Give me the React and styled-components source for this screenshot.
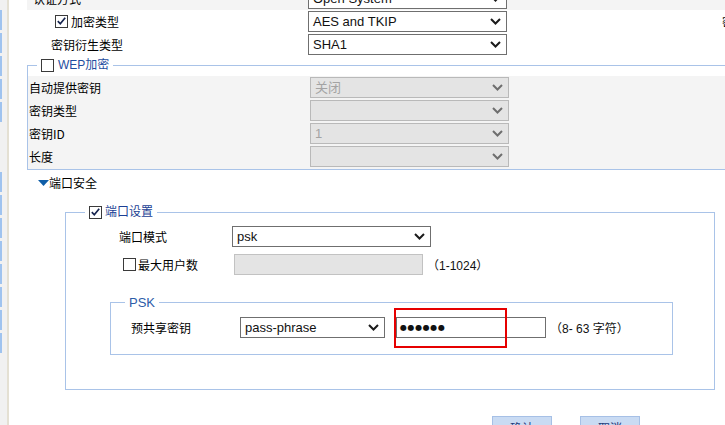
import React from "react";
import styled, { createGlobalStyle } from "styled-components";

const GlobalStyle = createGlobalStyle`
  html, body { margin: 0; padding: 0; background: #fff; }
  body { width: 725px; height: 425px; overflow: hidden; }
`;

const Page = styled.div`
  display: flex;
  width: 725px;
  height: 425px;
  overflow: hidden;
  background: #fff;
`;

const SideNav = styled.div`
  flex: none;
  width: 7px;
  background: #f1f1f1;
  border-right: 2px solid #e4e0d3;
  display: flex;
  flex-direction: column;
  gap: 3px;
  padding-top: 10px;
`;

const NavMark = styled.div`
  width: 2px;
  height: ${(p) => p.$h}px;
  background: ${(p) => (p.$blank ? "transparent" : "#9fc3ef")};
`;

const Main = styled.div`
  flex: 1;
  min-width: 0;
  overflow: hidden;
  padding-left: 18px;
  display: flex;
  flex-direction: column;
  font-family: "Noto Sans CJK SC", "Liberation Sans", sans-serif;
  font-size: 12px;
  color: #000;
`;

const FormRow = styled.div`
  display: grid;
  grid-template-columns: 281px 199px 1fr;
  align-items: center;
  height: 23px;
  flex: none;
  background: ${(p) => (p.$shade ? "#f4f4f4" : "transparent")};
  margin-top: ${(p) => p.$mt || 0}px;
`;

const Label = styled.div`
  display: flex;
  align-items: center;
  gap: ${(p) => p.$gap ?? 3}px;
  padding-left: ${(p) => p.$indent || 0}px;
  white-space: nowrap;
  line-height: 13px;
`;

const EdgeGlyph = styled.div`
  margin-left: 215px;
  white-space: nowrap;
`;

const SelectBox = styled.div`
  position: relative;
  box-sizing: border-box;
  width: ${(p) => p.$w || 199}px;
  height: 21px;
  border: 1px solid ${(p) => (p.$disabled ? "#b9b9b9" : "#6f6f6f")};
  background: ${(p) => (p.$disabled ? "#e4e4e4" : "#fff")};
  color: ${(p) => (p.$disabled ? "#a3a3a3" : "#111")};
  font-family: "Liberation Sans", "Noto Sans CJK SC", Arial, sans-serif;
  font-size: 13px;
  line-height: 19px;
  padding-left: 4px;
  white-space: nowrap;
  overflow: hidden;
`;

const Chevron = styled.svg`
  position: absolute;
  right: 5px;
  top: 6px;
`;

function Select({ value, disabled, w }) {
  return (
    <SelectBox $disabled={disabled} $w={w}>
      {value}
      <Chevron width="11" height="7" viewBox="0 0 11 7">
        <polyline
          points="1,1 5.5,5.5 10,1"
          fill="none"
          stroke={disabled ? "#6e6e6e" : "#1b1b1b"}
          strokeWidth="2"
        />
      </Chevron>
    </SelectBox>
  );
}

const Box = styled.span`
  display: inline-flex;
  flex: none;
  box-sizing: border-box;
  width: 13px;
  height: 13px;
  border: 1px solid #3a3a3a;
  background: #fff;
  margin-left: ${(p) => p.$ml || 0}px;
`;

function Checkbox({ checked, ml }) {
  return (
    <Box $ml={ml}>
      {checked && (
        <svg width="11" height="11" viewBox="0 0 11 11">
          <path d="M1.8 5.2 L4.3 7.8 L9.2 1.8" fill="none" stroke="#16244f" strokeWidth="1.7" />
        </svg>
      )}
    </Box>
  );
}

const Fieldset = styled.fieldset`
  box-sizing: border-box;
  min-width: 0;
  margin: ${(p) => p.$margin};
  padding: 0;
  border: 1px solid #a9c3e8;
  width: ${(p) => p.$w || "auto"};
  flex: none;
`;

const Legend = styled.legend`
  display: flex;
  align-items: center;
  gap: ${(p) => p.$gap ?? 3}px;
  margin-left: ${(p) => p.$ml}px;
  padding: 0 4px;
  height: ${(p) => p.$h || 13}px;
  line-height: ${(p) => p.$h || 13}px;
  color: ${(p) => p.$color};
  font-family: ${(p) => (p.$latin ? '"Liberation Sans", Arial, sans-serif' : '"Liberation Sans", "Noto Sans CJK SC", sans-serif')};
  font-size: ${(p) => p.$fs || 12}px;
  white-space: nowrap;
`;

const WepBody = styled.div`
  margin-top: 4px;
  background: #f4f4f4;
  padding: 0 0 1px 1px;
`;

const SectionHeader = styled.div`
  display: flex;
  align-items: center;
  height: 13px;
  margin-top: 6px;
  padding-left: 11px;
  flex: none;
`;

const PortBody = styled.div`
  padding: 7px 0 34px 44px;
  display: flex;
  flex-direction: column;
`;

const PortRow = styled.div`
  display: grid;
  grid-template-columns: ${(p) => p.$cols};
  align-items: center;
  height: 21px;
  padding-left: ${(p) => p.$pl || 0}px;
  margin-top: ${(p) => p.$mt || 0}px;
`;

const Field = styled.div`
  display: flex;
  align-items: center;
  gap: 4px;
  margin-left: ${(p) => p.$ml || 0}px;
`;

const DisabledInput = styled.div`
  box-sizing: border-box;
  width: 189px;
  height: 21px;
  background: #e4e4e4;
  border: 1px solid #c2c2c2;
`;

const Hint = styled.span`
  font-family: "Liberation Sans", "Noto Sans CJK SC", Arial, sans-serif;
  font-size: 12px;
  white-space: nowrap;
  color: #111;
`;

const PskBody = styled.div`
  padding: 7px 0 16px 20px;
`;

const PasswordWrap = styled.div`
  position: relative;
`;

const PasswordBox = styled.div`
  box-sizing: border-box;
  width: 150px;
  height: 21px;
  border: 1px solid #6f6f6f;
  background: #fff;
  padding-left: 3px;
  font-family: "DejaVu Sans", sans-serif;
  font-size: 8px;
  line-height: 19px;
  letter-spacing: 0.6px;
  color: #111;
`;

const RedMark = styled.div`
  position: absolute;
  left: -2px;
  top: -9px;
  width: 113px;
  height: 40px;
  box-sizing: border-box;
  border: 2px solid #e60000;
  pointer-events: none;
`;

const ButtonBar = styled.div`
  display: flex;
  gap: 28px;
  margin-top: 26px;
  padding-left: 465px;
  flex: none;
`;

const Button = styled.button`
  width: 60px;
  height: 22px;
  flex: none;
  background: #c9dbf3;
  border: 1px solid #a6c0e6;
  color: #1d3a7a;
  font-family: "Noto Sans CJK SC", sans-serif;
  font-size: 12px;
  padding: 0;
`;

const navMarks = [
  20, 20, 20, 20, 20, "blank", 20, 20, 20, 20, 20, 20, 20, 20,
];

export default function App() {
  return (
    <>
      <GlobalStyle />
      <Page>
        <SideNav>
          {navMarks.map((m, i) =>
            m === "blank" ? <NavMark key={i} $h={44} $blank /> : <NavMark key={i} $h={m} />
          )}
        </SideNav>
        <Main>
          <FormRow $shade $mt={-13}>
            <Label $indent={6}>认证方式</Label>
            <Select value="Open System" />
          </FormRow>
          <FormRow>
            <Label $indent={28} $gap={3}>
              <Checkbox checked />
              加密类型
            </Label>
            <Select value="AES and TKIP" />
            <EdgeGlyph>密</EdgeGlyph>
          </FormRow>
          <FormRow>
            <Label $indent={24}>密钥衍生类型</Label>
            <Select value="SHA1" />
          </FormRow>

          <Fieldset $margin="3px -20px 0 0">
            <Legend $ml={9} $color="#1f4ea0" $gap={4}>
              <Checkbox />
              WEP加密
            </Legend>
            <WepBody>
              <FormRow>
                <Label>自动提供密钥</Label>
                <Select value="关闭" disabled />
              </FormRow>
              <FormRow>
                <Label>密钥类型</Label>
                <Select value="" disabled />
              </FormRow>
              <FormRow>
                <Label>密钥ID</Label>
                <Select value="1" disabled />
              </FormRow>
              <FormRow>
                <Label>长度</Label>
                <Select value="" disabled />
              </FormRow>
            </WepBody>
          </Fieldset>

          <SectionHeader>
            <svg width="11" height="6" viewBox="0 0 11 6">
              <polygon points="0,0 11,0 5.5,6" fill="#0f5ea8" />
            </svg>
            端口安全
          </SectionHeader>

          <Fieldset $margin="17px 0 0 38px" $w="650px">
            <Legend $ml={19} $color="#1b3f94" $gap={3}>
              <Checkbox checked />
              端口设置
            </Legend>
            <PortBody>
              <PortRow $cols="113px auto" $pl={9}>
                <Label>端口模式</Label>
                <Select value="psk" />
              </PortRow>
              <PortRow $cols="113px auto" $pl={9} $mt={7}>
                <Label $gap={2}>
                  <Checkbox ml={4} />
                  最大用户数
                </Label>
                <Field $ml={2}>
                  <DisabledInput />
                  <Hint>（1-1024）</Hint>
                </Field>
              </PortRow>

              <Fieldset $margin="20px 0 0 0" $w="563px">
                <Legend $ml={14} $color="#2d5ca8" $latin $fs={13} $h={15}>
                  PSK
                </Legend>
                <PskBody>
                  <PortRow $cols="109px 145px auto">
                    <Label>预共享密钥</Label>
                    <Select value="pass-phrase" w={145} />
                    <Field $ml={11}>
                      <PasswordWrap>
                        <PasswordBox>●●●●●●</PasswordBox>
                        <RedMark />
                      </PasswordWrap>
                      <Hint>（8- 63 字符）</Hint>
                    </Field>
                  </PortRow>
                </PskBody>
              </Fieldset>
            </PortBody>
          </Fieldset>

          <ButtonBar>
            <Button>确认</Button>
            <Button>取消</Button>
          </ButtonBar>
        </Main>
      </Page>
    </>
  );
}
